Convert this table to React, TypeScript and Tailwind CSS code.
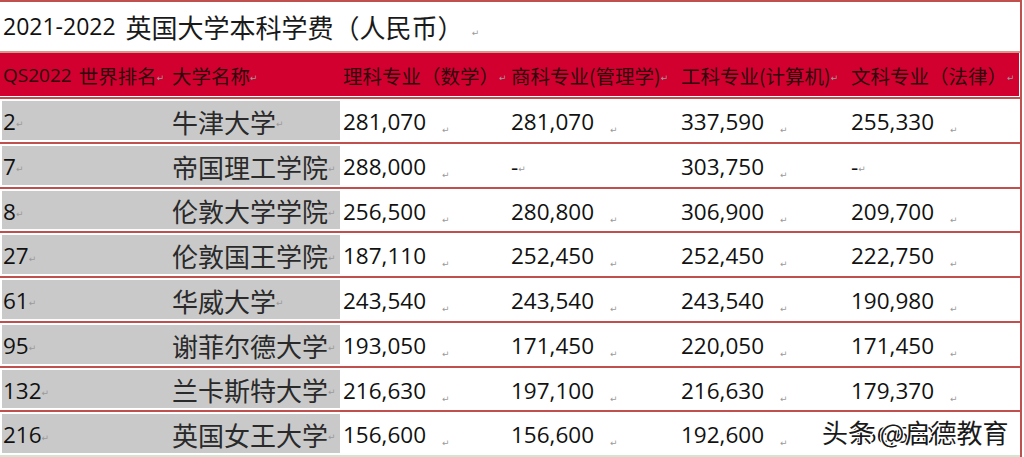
import React from 'react';

type Row = {
  rank: string;
  name: string;
  fees: string[];
};

const rows: Row[] = [
  { rank: '2', name: '牛津大学', fees: ['281,070', '281,070', '337,590', '255,330'] },
  { rank: '7', name: '帝国理工学院', fees: ['288,000', '-', '303,750', '-'] },
  { rank: '8', name: '伦敦大学学院', fees: ['256,500', '280,800', '306,900', '209,700'] },
  { rank: '27', name: '伦敦国王学院', fees: ['187,110', '252,450', '252,450', '222,750'] },
  { rank: '61', name: '华威大学', fees: ['243,540', '243,540', '243,540', '190,980'] },
  { rank: '95', name: '谢菲尔德大学', fees: ['193,050', '171,450', '220,050', '171,450'] },
  { rank: '132', name: '兰卡斯特大学', fees: ['216,630', '197,100', '216,630', '179,370'] },
  { rank: '216', name: '英国女王大学', fees: ['156,600', '156,600', '192,600', '156,600'] },
];

const headers = ['理科专业（数学）', '商科专业(管理学)', '工科专业(计算机)', '文科专业（法律）'];

// widths of the four fee columns (last one takes the rest)
const feeCols = ['w-[168px]', 'w-[170px]', 'w-[170px]', 'flex-1'];

// Word paragraph mark
const Mark = () => (
  <span className="text-[9px] leading-none text-[#9a9a9a] font-['DejaVu_Sans',sans-serif] relative top-[3px]">↵</span>
);

export default function App() {
  return (
    <div className="relative w-[1024px] h-[457px] overflow-hidden bg-white text-[#111] font-['Open_Sans','Noto_Sans_CJK_SC',sans-serif]">
      <div className="w-[1022px] border-t-2 border-r-2 border-[#c0504d]">
        {/* Title */}
        <div className="h-[51px] flex items-center pl-[3px] border-b-2 border-[#d29a8e]">
          <span className="text-[23px]">2021-2022</span>
          <span className="ml-[10px] text-[26px] font-['Noto_Sans_CJK_SC',sans-serif] text-[#1a1a1a]">英国大学本科学费（人民币）</span>
          <span className="ml-[8px]"><Mark /></span>
        </div>

        {/* Header */}
        <div className="border-b-2 border-[#c0504d] pb-px">
          <div className="h-[43px] mr-px bg-[#d2002f] flex items-center text-[#2e050c] pt-[2px]">
            <div className="w-[170px] pl-[3px] flex items-center">
              <span className="text-[19px]">QS2022</span>
              <span className="ml-[7px] text-[19.5px] font-['Noto_Sans_CJK_SC',sans-serif]">世界排名</span>
              <Mark />
            </div>
            <div className="w-[170px] pl-[2px] flex items-center text-[19.5px] font-['Noto_Sans_CJK_SC',sans-serif]">
              大学名称<Mark />
            </div>
            {headers.map((h, i) => (
              <div key={h} className={`${feeCols[i]} pl-[3px] flex items-center text-[19.5px] whitespace-nowrap font-['Noto_Sans_CJK_SC',sans-serif]`}>
                {h}
                <Mark />
              </div>
            ))}
          </div>
        </div>

        {/* Body */}
        {rows.map((r, idx) => (
          <div
            key={r.rank}
            className={`h-[44.75px] flex border-b-2 ${idx === rows.length - 1 ? 'border-[#cfe6cf]' : 'border-[#c0504d]'}`}
          >
            <div className="ml-[2px] w-[338px] my-[2px] bg-[#c9c9c9] flex items-center">
              <div className="w-[168px] pl-px pt-[3px] text-[22.5px] flex items-center">
                {r.rank}
                <Mark />
              </div>
              <div className="flex-1 pl-[2px] pt-[2px] text-[26px] font-['Noto_Sans_CJK_SC',sans-serif] text-[#2a2a2a] flex items-center whitespace-nowrap">
                {r.name}
                <Mark />
              </div>
            </div>
            {r.fees.map((f, i) => (
              <div key={i} className={`${feeCols[i]} pl-[3px] pt-[3px] flex items-center text-[22.5px]`}>
                {f}
                {f === '-' ? <Mark /> : <span className="ml-[16px]"><Mark /></span>}
              </div>
            ))}
          </div>
        ))}
      </div>

      {/* Watermark */}
      <div className="absolute left-[822px] top-[419px] text-[26px] leading-none text-[#1a1a1a] font-['Noto_Sans_CJK_SC',sans-serif] whitespace-nowrap [text-shadow:1px_1px_0_#fff,-1px_-1px_0_#fff,1px_-1px_0_#fff,-1px_1px_0_#fff]">
        头条 @启德教育
      </div>
    </div>
  );
}
